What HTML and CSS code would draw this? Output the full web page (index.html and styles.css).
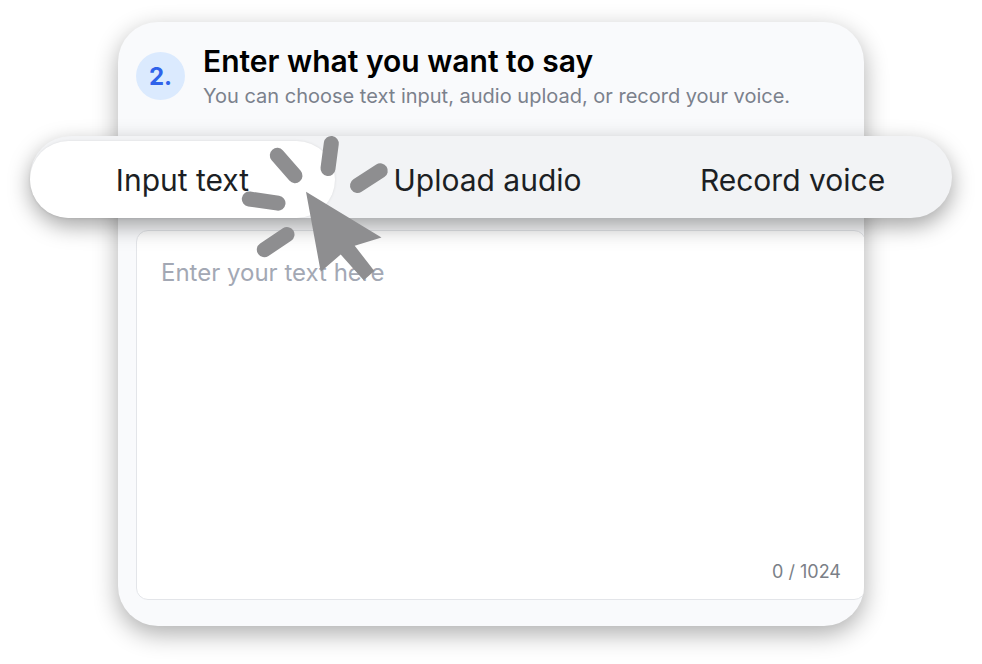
FILE: index.html
```html
<!DOCTYPE html>
<html lang="en">
  <head>
    <meta charset="UTF-8" />
    <meta name="viewport" content="width=device-width, initial-scale=1.0" />
    <title>Enter what you want to say</title>
    <link rel="stylesheet" href="styles.css">
  </head>
  <body>
    <main class="card">
      <header class="card-header">
        <span class="step">2.</span>
        <div class="heading">
          <h1>Enter what you want to say</h1>
          <p>You can choose text input, audio upload, or record your voice.</p>
        </div>
      </header>

      <div class="tabs" role="tablist">
        <button type="button" role="tab" class="tab active" aria-selected="true">Input text</button>
        <button type="button" role="tab" class="tab" aria-selected="false">Upload audio</button>
        <button type="button" role="tab" class="tab" aria-selected="false">Record voice</button>
        <!-- click pointer -->
        <svg class="pointer" viewBox="230 125 170 165" aria-hidden="true">
          <g stroke="#8e8e90" stroke-width="15" stroke-linecap="round">
            <path d="M277.3 155.3L295 175.7" />
            <path d="M331.3 143.5L328 168.5" />
            <path d="M380.3 170.8L357.5 185.5" />
            <path d="M249.3 199L278 203.2" />
            <path d="M287 234.5L264.3 249.7" />
          </g>
          <path fill="#8e8e90" d="M306 191.7L381.5 237.5L354.7 245.7L374.3 271L363.7 280.3L340.7 254.5L320.7 271.7Z" />
        </svg>
      </div>

      <div class="card-body">
        <div class="editor">
          <textarea aria-label="Text to say" placeholder="Enter your text here" maxlength="1024"></textarea>
          <span class="counter">0 / 1024</span>
        </div>
      </div>
    </main>
  </body>
</html>
```
FILE: styles.css
```css
* {
  box-sizing: border-box;
}
body {
  margin: 0;
  padding: 22px 30px 38px;
  background-color: #fff;
  font-family: Inter, "Liberation Sans", sans-serif;
}
.card {
  margin: 0 88px;
  background-color: #f9fafc;
  border-radius: 40px;
  box-shadow: 0 8px 24px rgba(0, 0, 0, 0.32);
}
.card-header {
  display: flex;
  align-items: center;
  gap: 18px;
  padding: 19px 18px 25px;
}
.step {
  display: flex;
  align-items: center;
  justify-content: center;
  width: 49px;
  height: 48px;
  border-radius: 50%;
  background-color: #dbeafe;
  color: #2f62ea;
  font-size: 24px;
  font-weight: 700;
}
.heading {
  white-space: nowrap;
}
h1 {
  margin: 0;
  color: #000;
  font-size: 30px;
  font-weight: 600;
  line-height: 40px;
}
p {
  margin: 0;
  color: #7b818c;
  font-size: 20px;
  line-height: 30px;
}
.tabs {
  position: relative;
  display: flex;
  margin: 0 -88px;
  padding: 5px 7px 0 0;
  border-radius: 41px;
  background-color: #f2f3f5;
  box-shadow: 0 8px 22px rgba(0, 0, 0, 0.36);
}
.tab {
  flex: 1;
  height: 77px;
  padding: 0;
  border: 0;
  border-radius: 40px;
  background: none;
  color: #1c1f24;
  font-family: inherit;
  font-size: 30px;
}
.tab.active {
  background-color: #fff;
  box-shadow: 0 0 3px rgba(0, 0, 0, 0.1);
}
.pointer {
  position: absolute;
  top: -11px;
  left: 200px;
  width: 170px;
  height: 165px;
}
.card-body {
  overflow: hidden;
  padding: 12px 0 26px 18px;
  border-radius: 0 0 40px 40px;
}
/* the editor runs past the right edge of the card */
.editor {
  display: flex;
  flex-direction: column;
  height: 370px;
  margin-right: -2px;
  padding: 24px 24px 13px;
  border: 1px solid #e3e5e9;
  border-radius: 12px;
  background-color: #fff;
}
textarea {
  flex: 1;
  padding: 0;
  border: 0;
  outline: 0;
  resize: none;
  background: none;
  color: #1c1f24;
  font-family: inherit;
  font-size: 24px;
  line-height: 36px;
}
textarea::placeholder {
  color: #a3a8b4;
}
.counter {
  align-self: flex-end;
  color: #7b7f87;
  font-size: 18px;
  line-height: 28px;
}
```
